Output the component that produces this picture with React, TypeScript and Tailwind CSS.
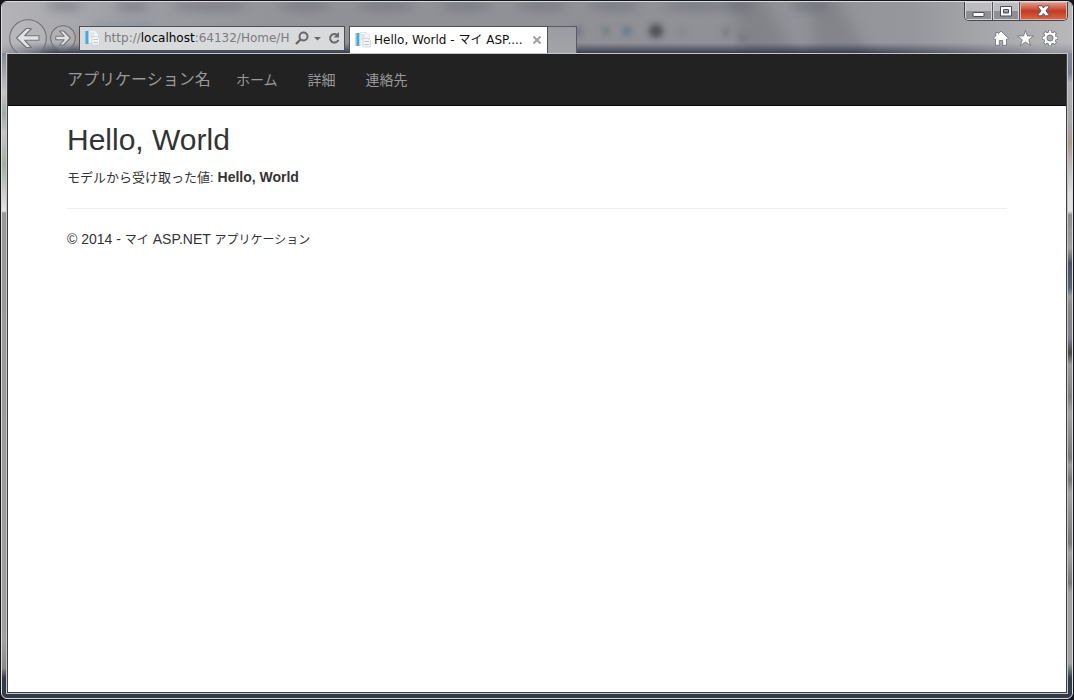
import React from "react";

const ui = "font-['DejaVu_Sans','Noto_Sans_CJK_JP',sans-serif]";

function Glass() {
  return (
    <svg className="absolute inset-0 h-full w-full" viewBox="0 0 1070 51" preserveAspectRatio="none" aria-hidden="true">
      <defs>
        <filter id="soft" x="-20%" y="-50%" width="140%" height="200%">
          <feGaussianBlur stdDeviation="4" />
        </filter>
        <filter id="spots" x="-20%" y="-50%" width="140%" height="200%">
          <feGaussianBlur stdDeviation="3" />
        </filter>
        <filter id="streak" x="-40%" y="-50%" width="180%" height="200%">
          <feGaussianBlur stdDeviation="7" />
        </filter>
        <linearGradient id="sheen" x1="0" x2="1" y1="0" y2="0">
          <stop offset="0" stopColor="#b4b4b8" />
          <stop offset="0.12" stopColor="#9c9da3" />
          <stop offset="0.3" stopColor="#909197" />
          <stop offset="0.7" stopColor="#909197" />
          <stop offset="0.85" stopColor="#96979c" />
          <stop offset="1" stopColor="#b8b8bb" />
        </linearGradient>
        <linearGradient id="shade" x1="0" x2="0" y1="0" y2="1">
          <stop offset="0.8" stopColor="#3c4152" stopOpacity="0" />
          <stop offset="1" stopColor="#343a4a" stopOpacity="0.95" />
        </linearGradient>
        <linearGradient id="edges" x1="0" x2="1" y1="0" y2="0">
          <stop offset="0" stopColor="#222" />
          <stop offset="0.05" stopColor="#fff" />
          <stop offset="0.8" stopColor="#fff" />
          <stop offset="0.97" stopColor="#444" />
        </linearGradient>
        <mask id="edgeMask">
          <rect width="1070" height="51" fill="url(#edges)" />
        </mask>
      </defs>
      <rect width="1070" height="51" fill="url(#sheen)" />
      <g filter="url(#streak)" fill="#6d6e74" opacity="0.4">
        <path d="M725-10h32l40 71h-52z" />
        <path d="M806-10h26l38 71h-56z" />
      </g>
      <g filter="url(#soft)" fill="#646876" opacity="0.45">
        <ellipse cx="62" cy="4" rx="18" ry="5" />
        <ellipse cx="130" cy="4" rx="16" ry="5" />
        <ellipse cx="208" cy="4" rx="38" ry="5" />
        <ellipse cx="302" cy="4" rx="25" ry="5" />
        <ellipse cx="384" cy="4" rx="28" ry="5" />
        <ellipse cx="464" cy="4" rx="26" ry="5" />
        <ellipse cx="540" cy="4" rx="26" ry="5" />
        <ellipse cx="612" cy="4" rx="26" ry="5" />
        <ellipse cx="695" cy="4" rx="34" ry="5" />
        <ellipse cx="735" cy="4" rx="16" ry="6" />
        <ellipse cx="808" cy="4" rx="20" ry="6" />
      </g>
      <g filter="url(#spots)" opacity="0.6">
        <rect x="90" y="21" width="60" height="4" fill="#7c8fa0" />
        <rect x="74" y="28" width="4" height="14" fill="#b08f6c" />
        <circle cx="604" cy="29" r="4" fill="#5a6a64" />
        <circle cx="625" cy="29" r="5" fill="#4d6680" />
        <circle cx="654" cy="29" r="7" fill="#22242b" />
        <circle cx="575" cy="30" r="6" fill="#656a78" />
        <circle cx="680" cy="30" r="3" fill="#77787e" />
        <circle cx="724" cy="30" r="4" fill="#66676c" />
        <circle cx="740" cy="36" r="4" fill="#66676c" />
      </g>
      <rect width="1070" height="51" fill="url(#shade)" mask="url(#edgeMask)" />
    </svg>
  );
}

function PageIcon() {
  return (
    <svg width="16" height="16" viewBox="0 0 16 16" aria-hidden="true" className="shrink-0">
      <rect x="1" y="1" width="3.500" height="13" fill="#4da6d8" />
      <rect x="0" y="1" width="1.500" height="13" fill="#bcdff0" />
      <path d="M5 .5h6l3.500 3.500v9H5z" fill="#f2f5f9" stroke="#d3d9e0" strokeWidth=".7" />
      <path d="M6 3h4M6 5h4M6 7h2" stroke="#d0d7e0" strokeWidth="1" />
      <path d="M8 6.500h5l2.500 2v6.500H8z" fill="#f3f5f8" stroke="#c6ccd5" strokeWidth=".7" />
      <path d="M9.500 9.500h4.500M9.500 12.500h4.500" stroke="#b9c1cd" strokeWidth="1" />
    </svg>
  );
}

function RoundArrow({ large, label }: { large?: boolean; label: string }) {
  return (
    <button type="button" aria-label={label} className={large ? "size-[38px]" : "size-[26px]"}>
      {large ? (
        <svg viewBox="0 0 38 38" className="size-full">
          <circle cx="19" cy="19" r="18.300" fill="#fff" fillOpacity=".08" stroke="#707176" strokeWidth="1.100" />
          <path d="M17.300 9.500h5.200L15.700 16.700H30v4.600H15.700l6.800 7.200h-5.200L7.500 19z" fill="#e2e2e4" stroke="#75767b" strokeWidth="1.100" strokeLinejoin="round" />
        </svg>
      ) : (
        <svg viewBox="0 0 26 26" className="size-full">
          <circle cx="13" cy="13" r="12.300" fill="#fff" fillOpacity=".08" stroke="#707176" strokeWidth="1.100" />
          <path d="M13.700 6h-4.200l4.700 5.200H5.800v3.600h8.400L9.500 20h4.200l6.600-7z" fill="#e2e2e4" stroke="#75767b" strokeWidth="1.100" strokeLinejoin="round" />
        </svg>
      )}
    </button>
  );
}

function AddressBar() {
  return (
    <div className="flex h-[25px] w-[266px] items-center border border-[#4e5058] bg-[#d9dadc] pl-1">
      <PageIcon />
      <a href="#address" aria-label="Address" className={`ml-1 w-[191px] whitespace-nowrap text-[12px] leading-5 text-[#7b7b7e] ${ui}`}>
        http://<span className="text-black">localhost</span>:64132/Home/H
      </a>
      <button type="button" aria-label="Search">
        <svg width="14" height="16" viewBox="0 0 14 16">
          <circle cx="8.500" cy="6.500" r="4" fill="none" stroke="#68696c" strokeWidth="2" />
          <path d="M5.500 9.500 1 14" stroke="#68696c" strokeWidth="2.400" />
        </svg>
      </button>
      <button type="button" aria-label="Address history" className="ml-1">
        <svg width="9" height="16" viewBox="0 0 9 16">
          <path d="M1 7h7L4.500 10.500z" fill="#68696c" />
        </svg>
      </button>
      <button type="button" aria-label="Refresh" className="ml-[6px]">
        <svg width="13" height="16" viewBox="0 0 13 16">
          <path d="M9.200 5A4.300 4.300 0 1 0 10.400 9.800" fill="none" stroke="#68696c" strokeWidth="2" />
          <path d="M11 2v5.500H5.500z" fill="#68696c" />
        </svg>
      </button>
    </div>
  );
}

function Tabs() {
  return (
    <div className="ml-1 flex h-[27px] self-end">
      <div className="flex w-[199px] items-center border border-b-0 border-[#4e5058] bg-white pl-[5px]">
        <PageIcon />
        <span className={`ml-[3px] w-[158px] overflow-hidden whitespace-nowrap text-[12px] leading-5 text-[#111] ${ui}`}>
          Hello, World - マイ ASP....
        </span>
        <button type="button" aria-label="Close tab">
          <svg width="10" height="10" viewBox="0 0 10 10">
            <path d="m1.500 1.500 7 7m0-7-7 7" stroke="#a2a2a2" strokeWidth="2.200" />
          </svg>
        </button>
      </div>
      <button type="button" aria-label="New tab" className="w-[29px] border border-b-0 border-l-0 border-[#5a5b62] bg-linear-to-b from-[#9b9ca1] to-[#a3a4a8]" />
    </div>
  );
}

function WindowButtons() {
  return (
    <div className="flex h-[19px] overflow-hidden rounded-b-[5px] border border-t-0 border-[#46474e]">
      <button type="button" aria-label="Minimize" className="flex w-[28px] items-center justify-center border-r border-[#55565e] bg-linear-to-b from-[#bcbcc0] from-50% to-[#8f9096] to-50% shadow-[inset_0_0_0_1px_#d5d5d8]">
        <svg width="13" height="13" viewBox="0 0 13 13">
          <rect x="1" y="7.500" width="11" height="4" rx=".5" fill="#fff" stroke="#4a4b58" />
        </svg>
      </button>
      <button type="button" aria-label="Maximize" className="flex w-[27px] items-center justify-center border-r border-[#55565e] bg-linear-to-b from-[#bcbcc0] from-50% to-[#8f9096] to-50% shadow-[inset_0_0_0_1px_#d5d5d8]">
        <svg width="12" height="11" viewBox="0 0 12 11">
          <path d="M.5.500h11v9.500H.5zM3.500 3.500v3.500h5V3.500z" fill="#fff" fillRule="evenodd" stroke="#4a4b58" />
        </svg>
      </button>
      <button type="button" aria-label="Close" className="flex w-[47px] items-center justify-center bg-linear-to-b from-[#e0a092] from-0% via-[#c23a22] via-50% to-[#d9684a] to-100% shadow-[inset_0_0_0_1px_#e9b0a2]">
        <svg width="13" height="12" viewBox="0 0 13 12">
          <path d="M1 .8h3.800L6.500 3 8.200.8H12v1L9 5.800l3 4v1H8.200L6.500 8.600l-1.700 2.200H1v-1l3-4-3-4z" fill="#fff" stroke="#4a4b58" strokeWidth=".9" />
        </svg>
      </button>
    </div>
  );
}

function Tools() {
  const teeth = [0, 45, 90, 135];
  return (
    <div className="mr-2 flex items-center gap-2">
      <button type="button" aria-label="Home">
        <svg width="16" height="16" viewBox="0 0 16 16">
          <path d="m8 1 7.400 7.200-1 1.300-.9-.5v6.300H9.700v-4.800H6.300v4.800H2.500V9l-.9.500-1-1.300L2.800 6V2.500h2.400v1.200z" fill="#fff" stroke="#6b6c71" strokeWidth=".8" />
        </svg>
      </button>
      <button type="button" aria-label="Favorites">
        <svg width="17" height="16" viewBox="0 0 17 16">
          <path d="m8.500.5 2 5.500h6l-4.700 3.700 1.700 5.800-5-3.500-5 3.500 1.700-5.800L.5 6h6z" fill="#fff" stroke="#6b6c71" strokeWidth=".8" />
        </svg>
      </button>
      <button type="button" aria-label="Settings">
        <svg width="16" height="16" viewBox="0 0 16 16">
          {teeth.map((a) => (
            <path key={a} d="M8 0v16" stroke="#6b6c71" strokeWidth="3.600" transform={`rotate(${a} 8 8)`} />
          ))}
          <circle cx="8" cy="8" r="6.400" fill="#6b6c71" />
          {teeth.map((a) => (
            <path key={a} d="M8 .6v14.800" stroke="#fff" strokeWidth="2.300" transform={`rotate(${a} 8 8)`} />
          ))}
          <circle cx="8" cy="8" r="5.800" fill="#fff" />
          <circle cx="8" cy="8" r="3.100" fill="#a9aaad" stroke="#6b6c71" strokeWidth=".8" />
        </svg>
      </button>
    </div>
  );
}

function Page() {
  const jp = "font-['Liberation_Sans','Noto_Sans_CJK_JP',sans-serif]";
  return (
    <div className={`min-w-0 flex-1 bg-white text-[14px] leading-5 text-[#333] ${jp}`}>
      <nav className="border-b border-[#080808] bg-[#222] text-[#999]">
        <div className="mx-auto flex h-[51px] max-w-[970px] items-center px-[15px]">
          <a href="#top" className="w-[154px] text-[16px]">アプリケーション名</a>
          <a href="#home" className="px-[15px]">ホーム</a>
          <a href="#about" className="px-[15px]">詳細</a>
          <a href="#contact" className="px-[15px]">連絡先</a>
        </div>
      </nav>
      <main className="mx-auto max-w-[970px] px-[15px] pt-[17px]">
        <h2 className="text-[30px] leading-[33px]">Hello, World</h2>
        <p className="mt-[11px]">
          <span className="text-[13px]">モデルから受け取った値:</span> <strong>Hello, World</strong>
        </p>
        <hr className="my-5 border-[#eee]" />
        <footer>
          <p>
            © 2014 - <span className="text-[12px]">マイ</span> ASP.NET <span className="text-[12px]">アプリケーション</span>
          </p>
        </footer>
      </main>
    </div>
  );
}

export default function App() {
  return (
    <div className="flex min-h-screen flex-col bg-[#15161c] p-px">
      <div className="flex flex-1 flex-col overflow-hidden rounded-[6px] border border-[#dcdcdf] bg-[#323b48]">
        <header className="relative h-[51px] overflow-hidden">
          <Glass />
          <div className="relative flex h-full justify-between">
            <div className="flex h-full items-start pl-[7px]">
              <div className="flex items-center gap-[3px] pt-[17px]">
                <RoundArrow large label="Back" />
                <RoundArrow label="Forward" />
                <AddressBar />
              </div>
              <Tabs />
            </div>
            <div className="flex flex-col items-end gap-[9px] pr-1">
              <WindowButtons />
              <div className="pr-[2px]">
                <Tools />
              </div>
            </div>
          </div>
        </header>
        <div className="flex flex-1">
          <div className="w-1 bg-[linear-gradient(#858891_0px,#c8c5c3_40px,#9eaa9c_60px,#c8c5c3_80px,#9eb09e_112px,#d8d3cd_145px,#e6e2e0_158px,#9c9797_160px,#a39e9e_590px,#8d8888_615px,#323b48_625px)]" />
          <div className="flex flex-1 border border-[#c5c7cd]">
            <div className="flex flex-1 border border-t-0 border-[#3d3f45]">
              <Page />
            </div>
          </div>
          <div className="w-1 bg-[linear-gradient(#858891_0px,#7a7d8a_20px,#b0b0b2_30px,#a8a8aa_70px,#a89c8c_90px,#b5b1ad_105px,#dededb_140px,#e2e2df_158px,#8e8e8d_162px,#a0a09f_195px,#4b5365_210px,#586070_235px,#9b9b9a_243px,#888887_255px,#7f808b_285px,#444444_300px,#9b9b9a_312px,#7e7e7e_345px,#a3a3a2_360px,#777777_405px,#9b9b9a_412px,#747474_427px,#a3a3a2_440px,#777777_490px,#a3a3a2_500px,#777777_530px,#a3a3a2_540px,#a3a3a2_610px,#323b48_625px)]" />
        </div>
        <div className="h-1" />
      </div>
    </div>
  );
}
